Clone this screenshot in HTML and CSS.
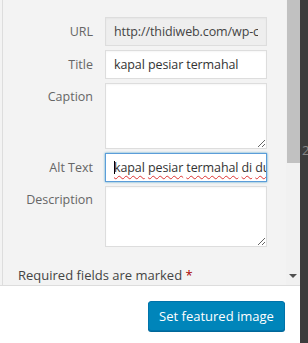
FILE: index.html
```html
<!DOCTYPE html>
<html lang="en">
<head>
  <meta charset="UTF-8" />
  <meta name="viewport" content="width=device-width, initial-scale=1" />
  <title>Featured Image</title>
  <link rel="stylesheet" href="styles.css">
</head>
<body>

  <div class="frame">
    <div class="modal">

      <!-- attachment details -->
      <div class="sidebar">
        <div class="details">
          <label class="setting">
            <span class="name">URL</span>
            <input type="text" class="field readonly" value="http://thidiweb.com/wp-content/uploads/2016/05/kapal-pesiar.jpg" readonly>
          </label>
          <label class="setting">
            <span class="name">Title</span>
            <input type="text" class="field" value="kapal pesiar termahal">
          </label>
          <label class="setting">
            <span class="name top">Caption</span>
            <textarea class="field area tall"></textarea>
          </label>
          <label class="setting">
            <span class="name">Alt Text</span>
            <div class="field focused">
              <span class="value"><span class="caret"></span><span class="typo">kapal</span> <span class="typo">pesiar</span> <span class="typo">termahal</span> <span class="typo">di</span> <span class="typo">dunia</span></span>
            </div>
          </label>
          <label class="setting">
            <span class="name top">Description</span>
            <textarea class="field area"></textarea>
          </label>
          <p class="required">Required fields are marked <span class="star">*</span></p>
        </div>

        <div class="scrollbar">
          <div class="thumb"></div>
          <div class="arrow"></div>
        </div>
      </div>

      <!-- toolbar -->
      <div class="toolbar">
        <button class="button-primary">Set featured image</button>
      </div>
    </div>

    <div class="backdrop"><span class="peek">2</span></div>
  </div>

</body>
</html>
```

FILE: styles.css
```css
* {
  box-sizing: border-box;
  margin: 0;
  padding: 0;
}

body {
  font-family: 'Open Sans', sans-serif;
  font-size: 13px;
  color: #444;
  background: #fff;
  width: 308px;
  height: 343px;
  overflow: hidden;
}

.frame {
  display: flex;
  height: 343px;
}

.modal {
  width: 300px;
  display: flex;
  flex-direction: column;
  background: #fff;
}

.sidebar {
  height: 286px;
  display: flex;
  background: #f3f3f3;
  border-bottom: 1px solid #ddd;
  padding-left: 2px;
  overflow: hidden;
}

.details {
  flex: 1;
  border-left: 1px solid #ddd;
  padding-top: 17px;
  display: flex;
  flex-direction: column;
  gap: 4px;
}

.setting {
  display: flex;
  align-items: center;
  gap: 12px;
}

.name {
  width: 90px;
  text-align: right;
  color: #666;
  font-size: 12.5px;
}

.name.top {
  align-self: flex-start;
  padding-top: 5px;
}

.field {
  width: 162px;
  height: 29px;
  border: 1px solid #ddd;
  background: #fff;
  font-family: inherit;
  font-size: 12.5px;
  letter-spacing: -0.1px;
  color: #333;
  padding: 0 8px;
  box-shadow: inset 0 1px 2px rgba(0, 0, 0, 0.04);
  outline: none;
}

.field.readonly {
  background: #eee;
  color: #444;
}

.field.area {
  height: 61px;
  resize: both;
}

.field.area.tall {
  height: 66px;
}

.field.focused {
  display: flex;
  align-items: center;
  overflow: hidden;
  border-color: #5b9dd9;
  box-shadow: 0 0 2px rgba(30, 140, 190, 0.8);
}

.value {
  white-space: pre;
}

.caret {
  display: inline-block;
  width: 1px;
  height: 13px;
  background: #000;
  margin-right: -1px;
  vertical-align: -2px;
}

.typo {
  text-decoration: underline wavy #d33;
  text-decoration-thickness: 1px;
  text-underline-offset: 3px;
}

.required {
  margin-top: 15px;
  padding-left: 15px;
  font-size: 13px;
  color: #444;
}

.star {
  color: #a00;
}

.scrollbar {
  width: 14px;
  background: #f1f1f1;
  display: flex;
  flex-direction: column;
  justify-content: space-between;
  align-items: center;
}

.thumb {
  width: 13px;
  height: 163px;
  background: #c1c1c1;
}

.arrow {
  width: 0;
  height: 0;
  border-left: 4px solid transparent;
  border-right: 4px solid transparent;
  border-top: 4px solid #505050;
  margin-bottom: 7px;
}

.toolbar {
  flex: 1;
  display: flex;
  justify-content: flex-end;
  padding: 15px 15px 0 0;
}

.button-primary {
  height: 30px;
  width: 137px;
  background: #0085ba;
  border: 1px solid #0073aa;
  border-radius: 3px;
  box-shadow: 0 1px 0 #006799;
  color: #fff;
  font-family: inherit;
  font-size: 13px;
}

.backdrop {
  width: 8px;
  background: #3c3c3c;
  position: relative;
  overflow: hidden;
}

.peek {
  position: absolute;
  left: 2px;
  top: 141px;
  font-size: 13px;
  color: #888;
}
```
